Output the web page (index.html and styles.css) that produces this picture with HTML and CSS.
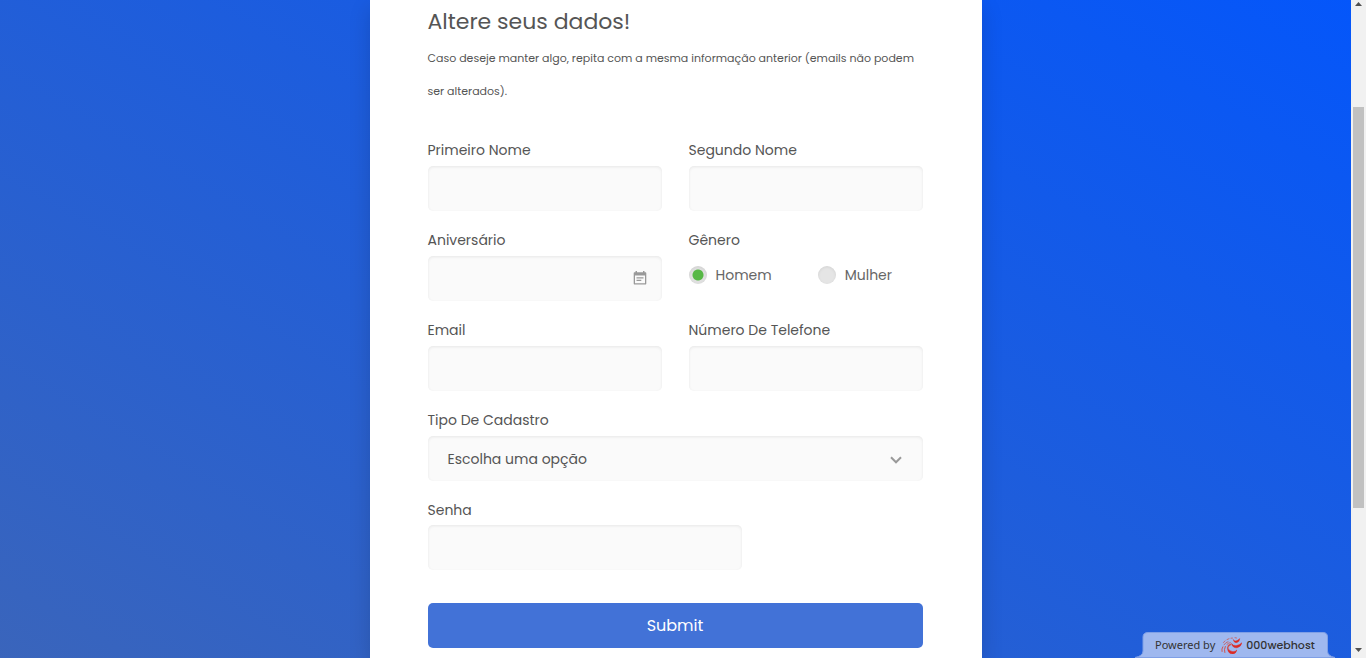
FILE: index.html
```html
<!DOCTYPE html>
<html lang="pt-BR">
<head>
<meta charset="utf-8">
<meta name="viewport" content="width=device-width, initial-scale=1">
<title>Altere seus dados!</title>
<link rel="stylesheet" href="styles.css">
</head>
<body>
<div class="shell">
  <main class="page">
    <section class="card">
      <h1 class="title">Altere seus dados!</h1>
      <p class="intro">Caso deseje manter algo, repita com a mesma informação anterior (emails não podem ser alterados).</p>
      <form class="form">
        <div class="row">
          <div class="field">
            <label class="label" for="first">Primeiro Nome</label>
            <input class="control" id="first" type="text">
          </div>
          <div class="field">
            <label class="label" for="last">Segundo Nome</label>
            <input class="control" id="last" type="text">
          </div>
        </div>
        <div class="row">
          <div class="field">
            <label class="label" for="birthday">Aniversário</label>
            <div class="control-wrap">
              <input class="control" id="birthday" type="text">
              <svg class="icon icon-calendar" viewBox="0 0 14 14" aria-hidden="true">
                <path fill="#999" fill-rule="evenodd" d="M2.500 0h1.500v1.300h6V0h1.500v1.300h.8c.6 0 1 .4 1 1v10.200c0 .6-.4 1-1 1H1.700c-.6 0-1-.4-1-1V2.300c0-.6.4-1 1-1h.8zM2 4.600v7.700h10V4.600zM3.500 6.200h7v1.300h-7zM3.500 8.800h4.800v1.300H3.500z"/>
              </svg>
            </div>
          </div>
          <fieldset class="field group">
            <legend class="label">Gênero</legend>
            <div class="options">
              <label class="option"><input class="radio" type="radio" name="gender" checked>Homem</label>
              <label class="option"><input class="radio" type="radio" name="gender">Mulher</label>
            </div>
          </fieldset>
        </div>
        <div class="row">
          <div class="field">
            <label class="label" for="email">Email</label>
            <input class="control" id="email" type="email">
          </div>
          <div class="field">
            <label class="label" for="phone">Número De Telefone</label>
            <input class="control" id="phone" type="tel">
          </div>
        </div>
        <div class="field">
          <label class="label" for="type">Tipo De Cadastro</label>
          <div class="control-wrap">
            <select class="control select" id="type"><option>Escolha uma opção</option></select>
            <svg class="icon icon-chevron" viewBox="0 0 12 8" aria-hidden="true">
              <path fill="none" stroke="#999" stroke-width="2" d="M1 1.300L6 6.300l5-5"/>
            </svg>
          </div>
        </div>
        <div class="field password">
          <label class="label" for="password">Senha</label>
          <input class="control" id="password" type="password">
        </div>
        <button class="submit" type="button">Submit</button>
      </form>
    </section>
    <a class="badge" href="#">
      <svg class="badge-shape" viewBox="0 0 200 26" preserveAspectRatio="none" aria-hidden="true">
        <path fill="#9fb8ef" stroke="#7f9fe6" d="M0 25.500Q8 24 8 19V5Q8 .5 13 .5H188Q192.500 .5 192.500 5V19Q192.500 24 200 25.500Z"/>
      </svg>
      <span class="badge-text">Powered by</span>
      <svg class="badge-logo" viewBox="0 0 21 17" aria-hidden="true">
        <g fill="#dc2a25" stroke="#dc2a25" stroke-width=".5">
          <path d="M6.500 10.500Q8 14.500 12 14.700Q14.800 14.600 15.800 13Q15 16.800 11.500 17Q6.500 16.500 6.500 10.500Z"/>
          <path d="M10.500 6.500Q12 9 15.500 8.600Q19 8 20.800 5.800Q20.200 9.800 16 10.800Q11.500 11 10.500 6.500Z"/>
          <path d="M12.300 2.500Q13 4.400 15 4Q17.500 3.400 18.600 1.600Q18.600 4.800 15.800 5.600Q12.800 6 12.300 2.500Z"/>
        </g>
        <g fill="none" stroke="#d0544f" stroke-linecap="round">
          <path d="M9.500 7.500Q7 8.300 6.800 10.500" stroke-width="1.400"/>
          <path d="M1 14.500Q.3 12 1.800 9.800M3.800 15.500Q2.800 12.500 4.300 9.500" stroke-width="1"/>
          <path d="M3 7.800Q4.500 5.500 7 4.700M6 7.300Q7.500 5.800 9.300 5.600M2.500 5.500L4 3.900M6 2.600L8 1.700M10 1.200L11.500 1.100M14 .7L15.500 1" stroke-width=".8"/>
        </g>
      </svg>
      <span class="badge-name">000webhost</span>
    </a>
  </main>
  <div class="scrollbar" aria-hidden="true">
    <svg class="arrow" viewBox="0 0 7 4"><path fill="#505050" d="M0 4L3.500 0L7 4Z"/></svg>
    <div class="track"><div class="thumb"></div></div>
    <svg class="arrow" viewBox="0 0 7 4"><path fill="#505050" d="M0 0H7L3.500 4Z"/></svg>
  </div>
</div>
</body>
</html>
```
FILE: styles.css
```css
* { box-sizing: border-box; }

body {
  margin: 0;
  font-family: Poppins, Inter, sans-serif;
  font-size: 14px;
  color: #555;
}

.shell {
  display: grid;
  grid-template-columns: 1fr 15px;
  height: 100vh;
  overflow: hidden;
}

.page {
  position: relative;
  display: flex;
  justify-content: center;
  min-height: 0;
  background: linear-gradient(30deg, #4267b2, #0055ff 98%) 0 -148px / 100% 1024px;
}

.card {
  width: 100%;
  max-width: 612px;
  min-height: 100%;
  padding: 4px 59px 10px 58px;
  background: #fff;
  box-shadow: 0 8px 20px rgba(0, 0, 0, 0.15);
}

.title {
  margin: 0 0 2px;
  font-size: 22px;
  font-weight: 400;
  line-height: 36px;
}

.intro {
  margin: 0 0 30px;
  font-size: 11px;
  line-height: 33px;
}

.form {
  display: flex;
  flex-direction: column;
  gap: 17px;
}

.row {
  display: grid;
  grid-template-columns: 1fr 1fr;
  gap: 27px;
}

.field { min-width: 0; }

.label {
  display: block;
  margin-bottom: 4px;
  line-height: 24px;
}

.group {
  margin: 0;
  padding: 0;
  border: 0;
}

.group .label { padding: 0; }

.control-wrap { position: relative; }

.control {
  display: block;
  width: 100%;
  height: 45px;
  padding: 0 20px;
  border: 0;
  border-radius: 5px;
  background: #fafafa;
  box-shadow: inset 0 1px 3px rgba(0, 0, 0, 0.08);
  font: inherit;
  color: #555;
}

.select { appearance: none; }

.icon {
  position: absolute;
  pointer-events: none;
}

.icon-calendar {
  top: 15px;
  right: 15px;
  width: 14px;
  height: 14px;
}

.icon-chevron {
  top: 20px;
  right: 21px;
  width: 12px;
  height: 8px;
}

.options {
  display: flex;
  gap: 46px;
  padding-top: 7px;
}

.option {
  display: flex;
  align-items: center;
  gap: 9px;
  line-height: 24px;
  color: #666;
}

.radio {
  appearance: none;
  width: 18px;
  height: 18px;
  margin: 0;
  border-radius: 50%;
  background: #e5e5e5;
  box-shadow: inset 0 1px 3px rgba(0, 0, 0, 0.08);
}

.radio:checked {
  background: radial-gradient(circle, #57b846 5px, #e0e0e0 6px);
}

.password {
  width: 314px;
  max-width: 100%;
}

.password .label { margin-bottom: 3px; }

.submit {
  height: 45px;
  margin-top: 16px;
  border: 0;
  border-radius: 5px;
  background: #4272d7;
  color: #fff;
  font: inherit;
  font-size: 16px;
}

.badge {
  position: absolute;
  right: 16px;
  bottom: 0;
  display: flex;
  align-items: center;
  width: 200px;
  height: 26px;
  padding-left: 20px;
  color: #333;
  font-family: "Noto Sans", sans-serif;
  font-size: 11px;
  line-height: 26px;
  text-decoration: none;
}

.badge-shape {
  position: absolute;
  inset: 0;
  width: 100%;
  height: 100%;
}

.badge-text,
.badge-logo,
.badge-name { z-index: 1; }

.badge-logo {
  width: 21px;
  height: 17px;
  margin: 0 4px 0 6px;
}

.badge-name {
  font-family: Poppins, Inter, sans-serif;
  font-size: 11px;
  font-weight: 500;
}

.scrollbar {
  display: flex;
  flex-direction: column;
  align-items: center;
  justify-content: space-between;
  padding: 2px 0 6px;
  background: #f1f1f1;
}

.arrow {
  width: 7px;
  height: 4px;
}

.track {
  flex: 1;
  width: 11px;
  padding-top: 101px;
}

.thumb {
  height: 401px;
  background: #c1c1c1;
}
```
